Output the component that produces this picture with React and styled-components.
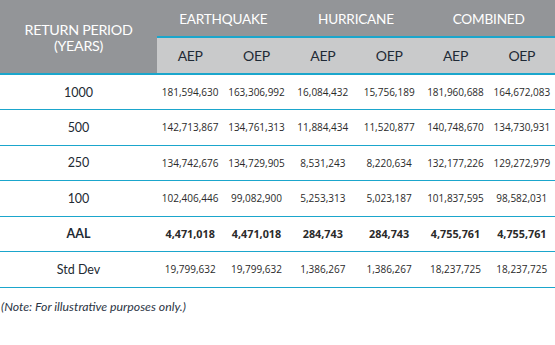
import React from 'react'
import styled, { createGlobalStyle } from 'styled-components'

const GlobalStyle = createGlobalStyle`
  html, body {
    margin: 0;
    padding: 0;
    background: #ffffff;
  }
`;

const rows = [
  { period: '1000', values: ['181,594,630', '163,306,992', '16,084,432', '15,756,189', '181,960,688', '164,672,083'] },
  { period: '500', values: ['142,713,867', '134,761,313', '11,884,434', '11,520,877', '140,748,670', '134,730,931'] },
  { period: '250', values: ['134,742,676', '134,729,905', '8,531,243', '8,220,634', '132,177,226', '129,272,979'] },
  { period: '100', values: ['102,406,446', '99,082,900', '5,253,313', '5,023,187', '101,837,595', '98,582,031'] },
  { period: 'AAL', values: ['4,471,018', '4,471,018', '284,743', '284,743', '4,755,761', '4,755,761'], bold: true },
  { period: 'Std Dev', values: ['19,799,632', '19,799,632', '1,386,267', '1,386,267', '18,237,725', '18,237,725'] },
];

const groups = ['EARTHQUAKE', 'HURRICANE', 'COMBINED'];

function App() {
  return (
    <Wrapper>
      <GlobalStyle />
      <Table>
        <colgroup>
          <col style={{ width: 157 }} />
          {[0, 1, 2, 3, 4, 5].map(i => <col key={i} />)}
        </colgroup>
        <thead>
          <tr>
            <PeriodHead rowSpan={2}>
              <HeadLine>RETURN PERIOD</HeadLine>
              <HeadLine>(YEARS)</HeadLine>
            </PeriodHead>
            {groups.map(g => <GroupHead key={g} colSpan={2}>{g}</GroupHead>)}
          </tr>
          <tr>
            {groups.map(g => (
              <React.Fragment key={g}>
                <SubHead>AEP</SubHead>
                <SubHead>OEP</SubHead>
              </React.Fragment>
            ))}
          </tr>
        </thead>
        <tbody>
          {rows.map(r => (
            <Row key={r.period}>
              <PeriodCell $bold={r.bold}>{r.period}</PeriodCell>
              {r.values.map((v, i) => <ValueCell key={i} $bold={r.bold}>{v}</ValueCell>)}
            </Row>
          ))}
        </tbody>
      </Table>
      <Note>(Note: For illustrative purposes only.)</Note>
    </Wrapper>
  )
}

const Wrapper = styled.div`
  width: 555px;
  height: 345px;
  background: #ffffff;
  overflow: hidden;
`;

const Table = styled.table`
  width: 555px;
  border-collapse: collapse;
  table-layout: fixed;
  font-family: "Lato", "Open Sans", sans-serif;
`;

const PeriodHead = styled.th`
  background: #939598;
  color: #ffffff;
  font-weight: 400;
  font-size: 14.3px;
  letter-spacing: -0.3px;
  padding: 2px 0 0;
  text-align: center;
  vertical-align: middle;
  border-bottom: 2px solid #1ba6cc;
`;

const HeadLine = styled.span`
  display: block;
  line-height: 15.5px;
  height: 15.5px;
`;

const GroupHead = styled.th`
  background: #939598;
  color: #ffffff;
  font-weight: 400;
  font-size: 13.6px;
  letter-spacing: -0.2px;
  height: 35px;
  padding: 1px 0 0;
  text-align: center;
  vertical-align: middle;
  border-bottom: 2px solid #1ba6cc;
`;

const SubHead = styled.th`
  background: #c9cacb;
  color: #1f2a36;
  font-weight: 400;
  font-size: 14px;
  letter-spacing: -0.3px;
  height: 35px;
  padding: 0;
  text-align: center;
  vertical-align: middle;
  border-bottom: 2px solid #1ba6cc;
`;

const Row = styled.tr`
  height: 35.5px;
  border-bottom: 1.5px solid #1ba6cc;
`;

const PeriodCell = styled.td`
  font-size: 12.5px;
  font-weight: ${p => (p.$bold ? 700 : 400)};
  color: #222a33;
  text-align: center;
  padding: 0;
`;

const ValueCell = styled.td`
  font-family: "Open Sans", sans-serif;
  font-size: ${p => (p.$bold ? '10.8px' : '10px')};
  font-weight: ${p => (p.$bold ? 700 : 400)};
  color: #2a2a2a;
  text-align: center;
  padding: 0;
  white-space: nowrap;
`;

const Note = styled.div`
  font-family: "Lato", "Open Sans", sans-serif;
  font-style: italic;
  font-size: 12.3px;
  color: #2b3544;
  margin-top: 11px;
  padding-left: 1px;
`;

export default App
